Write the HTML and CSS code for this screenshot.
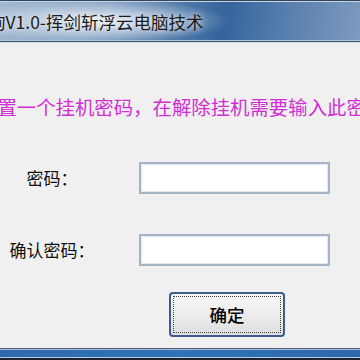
FILE: index.html
```html
<!DOCTYPE html>
<html lang="zh-CN">
<head>
<meta charset="utf-8">
<title>设置挂机密码</title>
<link rel="stylesheet" href="styles.css">
</head>
<body>
<div class="window">
  <div class="titlebar">
    <span class="title">询V1.0-挥剑斩浮云电脑技术</span>
  </div>
  <div class="content">
    <p class="msg">设置一个挂机密码，在解除挂机需要输入此密码</p>
    <div class="form">
      <label class="label" for="pw1">密码：</label>
      <input class="field" id="pw1" type="password">
      <label class="label" for="pw2">确认密码：</label>
      <input class="field" id="pw2" type="password">
    </div>
    <div class="actions">
      <button class="btn" type="button">确定</button>
    </div>
  </div>
  <div class="footer"></div>
</div>
</body>
</html>
```

FILE: styles.css
```css
* { box-sizing: border-box; }
html, body {
  margin: 0;
  padding: 0;
  width: 360px;
  height: 360px;
  overflow: hidden;
  background: #f0f0f0;
  font-family: "Noto Sans CJK SC", "Noto Sans", sans-serif;
}
.window {
  display: flex;
  flex-direction: column;
  height: 360px;
}
.titlebar {
  height: 43px;
  flex: none;
  display: flex;
  align-items: center;
  overflow: hidden;
  border-top: 1px solid #33455a;
  border-bottom: 1px solid #d3dbe4;
  box-shadow: inset 0 1px 0 #c6d5e5, inset 0 -1px 0 #46586e, inset 0 -2px 0 #aebfd2;
  background:
    radial-gradient(ellipse 130px 22px at 100px 20px, rgba(236,242,248,0.95), rgba(236,242,248,0) 100%),
    linear-gradient(100deg, #a3b9d2 0%, #7e9cc0 30%, #34649c 62%, #5a80ae 80%, #7d9bbf 100%);
}
.title {
  margin-left: -12px;
  margin-top: 1px;
  font-size: 17.5px;
  line-height: 20px;
  color: #1c1c1c;
  white-space: nowrap;
  text-shadow: 0 0 6px rgba(255,255,255,0.9);
}
.content {
  flex: 1;
  display: flex;
  flex-direction: column;
}
.msg {
  margin: 52px 0 0 -22px;
  font-size: 19.4px;
  line-height: 24px;
  color: #d02fd4;
  white-space: nowrap;
}
.form {
  display: grid;
  grid-template-columns: 104px 191px;
  column-gap: 35px;
  row-gap: 40px;
  align-items: center;
  margin-top: 43px;
}
.label {
  text-align: center;
  font-size: 17px;
  line-height: 22px;
  color: #111;
}
.field {
  width: 191px;
  height: 32px;
  margin: 0;
  border: 2px solid #a4b3c5;
  box-shadow: inset 0 0 0 1px #e2e8ef;
  background: #fff;
  outline: none;
}
.actions {
  display: flex;
  padding-left: 169px;
  margin-top: 26px;
}
.btn {
  width: 116px;
  height: 45px;
  margin: 0;
  border: 2px solid #3e5d8d;
  border-radius: 4px;
  background: linear-gradient(#f7f7f7, #ececec 50%, #dedede);
  outline: 1px dotted #444;
  outline-offset: -5px;
  font-family: "Noto Sans CJK SC", "Noto Sans", sans-serif;
  font-size: 17.5px;
  font-weight: 500;
  color: #000;
  padding: 0;
}
.footer {
  height: 12px;
  flex: none;
  border-top: 1px solid #4b5f77;
  border-bottom: 2px solid #1b232e;
  box-shadow: inset 0 1px 0 #a4bcd6, inset 0 -1px 0 #b8cce1;
  background: linear-gradient(90deg, #2c69ae, #3372b8 50%, #2b68ad);
}
```
